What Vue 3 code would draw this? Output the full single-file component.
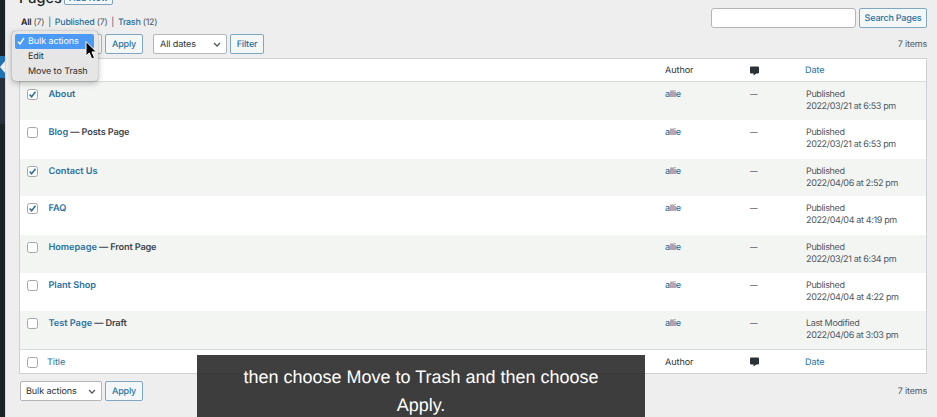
<script setup>
const rows = [
  { title: 'About', state: '', checked: true, status: 'Published', date: '2022/03/21 at 6:53 pm', h: 38 },
  { title: 'Blog', state: 'Posts Page', checked: false, status: 'Published', date: '2022/03/21 at 6:53 pm', h: 39 },
  { title: 'Contact Us', state: '', checked: true, status: 'Published', date: '2022/04/06 at 2:52 pm', h: 37 },
  { title: 'FAQ', state: '', checked: true, status: 'Published', date: '2022/04/04 at 4:19 pm', h: 39 },
  { title: 'Homepage', state: 'Front Page', checked: false, status: 'Published', date: '2022/03/21 at 6:34 pm', h: 38 },
  { title: 'Plant Shop', state: '', checked: false, status: 'Published', date: '2022/04/04 at 4:22 pm', h: 38 },
  { title: 'Test Page', state: 'Draft', checked: false, status: 'Last Modified', date: '2022/04/06 at 3:03 pm', h: 38 },
]
</script>

<template>
  <div class="screen">
    <aside class="sidebar">
      <div class="current"><i class="notch"></i></div>
      <div class="submenu"></div>
    </aside>
    <main class="content">
      <header class="heading">
        <h1>Pages</h1>
        <a class="add-new">Add New</a>
      </header>

      <div class="filters">
        <div class="views"><b>All</b> (7)<span class="bar">|</span><a>Published</a> (7)<span class="bar">|</span><a>Trash</a> (12)</div>
        <div class="search">
          <div class="input"></div>
          <button class="btn search-btn">Search Pages</button>
        </div>
      </div>

      <div class="tablenav">
        <div class="select bulk">
          <svg viewBox="0 0 8 5"><path d="M1 1l3 3 3-3" /></svg>
        </div>
        <button class="btn apply">Apply</button>
        <div class="select dates">All dates
          <svg viewBox="0 0 8 5"><path d="M1 1l3 3 3-3" /></svg>
        </div>
        <button class="btn filter">Filter</button>
        <span class="count">7 items</span>
      </div>

      <section class="table">
        <div class="row head">
          <span class="box"></span>
          <span class="name"></span>
          <span class="author">Author</span>
          <span class="comments">
            <svg viewBox="0 0 10 10"><path d="M1.2 0h7.6Q10 0 10 1.2v5.4Q10 7.8 8.8 7.8H7L4 10V7.8H1.2Q0 7.8 0 6.6V1.2Q0 0 1.2 0z" /></svg>
          </span>
          <a class="date">Date</a>
        </div>
        <div v-for="(row, i) in rows" :key="row.title" class="row item" :class="{ odd: i % 2 === 0 }" :style="{ height: row.h + 'px' }">
          <span class="box">
            <svg v-if="row.checked" viewBox="0 0 11 11"><path d="M2.6 5.6l2 2.2 3.9-5" /></svg>
          </span>
          <div class="name"><a>{{ row.title }}</a><span v-if="row.state" class="state"> — {{ row.state }}</span></div>
          <a class="author">allie</a>
          <span class="comments">—</span>
          <div class="date">{{ row.status }}<br>{{ row.date }}</div>
        </div>
        <div class="row head foot">
          <span class="box"></span>
          <a class="name">Title</a>
          <span class="author">Author</span>
          <span class="comments">
            <svg viewBox="0 0 10 10"><path d="M1.2 0h7.6Q10 0 10 1.2v5.4Q10 7.8 8.8 7.8H7L4 10V7.8H1.2Q0 7.8 0 6.6V1.2Q0 0 1.2 0z" /></svg>
          </span>
          <a class="date">Date</a>
        </div>
      </section>

      <div class="tablenav bottom">
        <div class="select bulk">Bulk actions
          <svg viewBox="0 0 8 5"><path d="M1 1l3 3 3-3" /></svg>
        </div>
        <button class="btn apply">Apply</button>
        <span class="count">7 items</span>
      </div>
    </main>

    <div class="menu">
      <div class="option selected">
        <svg viewBox="0 0 8 8"><path d="M1 4.6l2 2.4L7 1" /></svg>Bulk actions
      </div>
      <div class="option">Edit</div>
      <div class="option">Move to Trash</div>
    </div>
    <svg class="pointer" viewBox="0 0 12 20"><path d="M1 1v14.5l3.3-3.1 2.5 6 2.7-1.1-2.5-5.9h4.4z" /></svg>

    <div class="caption">then choose Move to Trash and then choose<br>Apply.</div>
  </div>
</template>

<style>
body {
  overflow: hidden;
}
</style>

<style scoped>
.screen {
  position: relative;
  display: flex;
  width: 937px;
  height: 417px;
  overflow: hidden;
  background: #eeeeee;
  color: #3c434a;
  font-family: Inter, "Liberation Sans", sans-serif;
  font-size: 9px;
  text-rendering: geometricPrecision;
  box-sizing: border-box;
}
.screen * {
  box-sizing: border-box;
}
a {
  color: #2a719f;
}
.sidebar {
  width: 5px;
  padding-top: 56px;
  background: #1b2228;
  flex: none;
}
.current {
  display: flex;
  align-items: center;
  justify-content: flex-end;
  height: 22px;
  background: #2271b1;
}
.notch {
  border: solid transparent;
  border-width: 6px 5px 6px 0;
  border-right-color: #eeeeee;
}
.submenu {
  height: 46px;
  background: #27303a;
}
.content {
  width: 922px;
  padding-left: 14px;
  border-left: 1px solid #d8d8d8;
  flex: none;
}
.heading {
  display: flex;
  align-items: flex-end;
  height: 5px;
  margin-left: -1px;
}
h1 {
  margin: 0 4px 0 0;
  font-size: 14.5px;
  line-height: 20px;
  font-weight: 500;
  color: #1d2327;
  width: 41px;
  transform: translateY(4px);
}
.add-new {
  width: 49px;
  height: 18px;
  border: 1px solid #7fa3bd;
  border-radius: 2px;
  background: #f4f6f7;
  text-align: center;
  line-height: 22px;
  font-weight: 500;
}
.filters {
  display: flex;
  justify-content: space-between;
  height: 29px;
  padding-top: 3px;
  padding-left: 1px;
}
.views {
  line-height: 12px;
  padding-top: 9px;
  white-space: nowrap;
  font-size: 8.9px;
  letter-spacing: -0.25px;
  color: #50575e;
}
.views b {
  color: #1d2327;
  font-weight: 600;
}
.views a {
  font-weight: 500;
}
.bar {
  margin: 0 3.9px;
}
.search {
  display: flex;
  gap: 3px;
}
.input {
  width: 145px;
  height: 20px;
  border: 1px solid #b2b5b9;
  border-radius: 3px;
  background: #fff;
}
.search-btn {
  width: 68px;
}
.btn {
  height: 20px;
  padding: 0;
  border: 1px solid #7fa6c2;
  border-radius: 2px;
  background: #f4f7f8;
  color: #2a719f;
  font: 500 9px Inter, sans-serif;
  letter-spacing: -0.3px;
  text-rendering: geometricPrecision;
  white-space: nowrap;
  flex: none;
}
.search .btn {
  letter-spacing: -0.2px;
}
.tablenav .btn {
  letter-spacing: -0.2px;
}
.tablenav {
  display: flex;
  align-items: center;
  height: 20px;
}
.select {
  display: flex;
  align-items: center;
  justify-content: space-between;
  height: 20px;
  padding: 0 5px 0 6px;
  border: 1px solid #b2b5b9;
  border-radius: 2px;
  background: #fff;
  color: #2c3338;
  font-size: 9.1px;
  letter-spacing: -0.12px;
  white-space: nowrap;
}
.bulk {
  padding-left: 5px;
}
.select svg {
  width: 8px;
  height: 5px;
  margin-left: auto;
  fill: none;
  stroke: #50575e;
  stroke-width: 1.3;
}
.bulk {
  width: 82px;
}
.apply {
  width: 38px;
  margin-left: 3px;
}
.dates {
  width: 74px;
  margin-left: 10px;
}
.filter {
  width: 34px;
  margin-left: 3px;
}
.count {
  margin-left: auto;
  color: #50575e;
  letter-spacing: -0.2px;
}
.table {
  margin-top: 4px;
  margin-left: -1px;
  width: 908px;
  border: 1px solid #cfd0d2;
  background: #fff;
}
.row {
  display: grid;
  grid-template-columns: 28px 617px 84px 57px 1fr;
}
.head {
  height: 23px;
  line-height: 24px;
  border-bottom: 1px solid #d9dadc;
  font-size: 9.1px;
  letter-spacing: -0.08px;
  color: #2c3338;
}
.foot {
  height: 24px;
  line-height: 25px;
  border-top: 1px solid #d9dadc;
  border-bottom: 0;
}
.box {
  width: 11px;
  height: 11px;
  margin-left: 7px;
  border: 1px solid #a3a7ab;
  border-radius: 2.5px;
  background: #fff;
}
.box svg {
  display: block;
  width: 11px;
  height: 11px;
  margin: -1px;
  fill: none;
  stroke: #2d6c9b;
  stroke-width: 1.5;
}
.head .box {
  margin-top: 7px;
}
.head .name,
.head .date {
  margin-left: -1px;
}
.item {
  line-height: 12px;
  padding-top: 7px;
}
.item .author {
  font-weight: 500;
  letter-spacing: -0.3px;
}
.item .name {
  font-weight: 600;
  font-size: 9.2px;
  padding-left: 0.4px;
}
.state {
  letter-spacing: -0.15px;
}
.odd {
  background: #f3f5f3;
}
.item .date {
  line-height: 12.4px;
  letter-spacing: -0.35px;
  color: #50575e;
}
.item .comments {
  padding-left: 1px;
  font-size: 7.5px;
}
.comments svg {
  display: block;
  width: 9px;
  height: 10px;
  margin-top: 7px;
  margin-left: 1px;
  fill: #2c3338;
}
.bottom {
  margin-top: 7px;
}
.menu {
  position: absolute;
  left: 12px;
  top: 31px;
  width: 86px;
  height: 50px;
  padding: 3px;
  border-radius: 4px;
  background: #e6e6e6;
  box-shadow: 0 0 1px rgba(0, 0, 0, 0.5), 0 2px 6px rgba(0, 0, 0, 0.28);
  color: #2b2b2b;
}
.option {
  height: 15px;
  line-height: 15px;
  padding-left: 13px;
  font-size: 9px;
  letter-spacing: -0.08px;
  white-space: nowrap;
}
.selected {
  position: relative;
  width: 79px;
  border-radius: 2px;
  background: #4b9af5;
  color: #fff;
}
.selected svg {
  position: absolute;
  left: 2px;
  top: 3px;
  width: 8px;
  height: 8px;
  fill: none;
  stroke: #fff;
  stroke-width: 1.4;
}
.pointer {
  position: absolute;
  left: 85px;
  top: 40px;
  width: 12px;
  height: 21px;
  fill: #000;
  stroke: #fff;
  stroke-width: 1;
}
.caption {
  position: absolute;
  left: 197px;
  top: 355px;
  width: 448px;
  height: 62px;
  padding-top: 8px;
  background: rgba(36, 36, 36, 0.88);
  color: #fff;
  font: 18px/28px "Liberation Sans", Arial, sans-serif;
  text-align: center;
}
</style>
